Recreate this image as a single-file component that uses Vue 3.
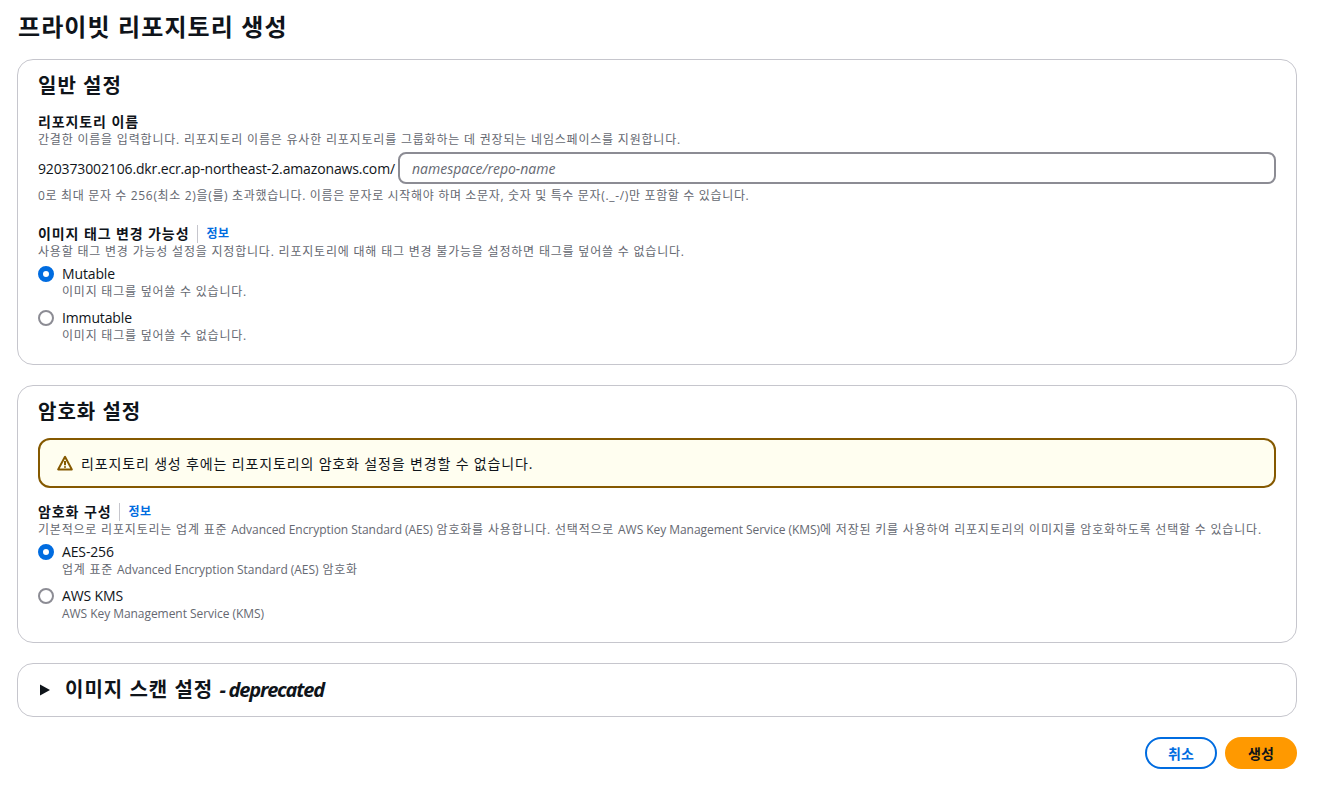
<template>
  <div class="page">
    <h1 class="page-title">프라이빗 리포지토리 생성</h1>

    <section class="card">
      <h2 class="card-title">일반 설정</h2>
      <div class="field">
        <div class="label">리포지토리 이름</div>
        <div class="desc">간결한 이름을 입력합니다. 리포지토리 이름은 유사한 리포지토리를 그룹화하는 데 권장되는 네임스페이스를 지원합니다.</div>
        <div class="repo-row">
          <span class="prefix">920373002106.dkr.ecr.ap-northeast-2.amazonaws.com/</span>
          <input class="repo-input" type="text" placeholder="namespace/repo-name" />
        </div>
        <div class="hint">0로 최대 문자 수 256(최소 2)을(를) 초과했습니다. 이름은 문자로 시작해야 하며 소문자, 숫자 및 특수 문자(._-/)만 포함할 수 있습니다.</div>
      </div>

      <div class="field field-gap">
        <div class="label-row">
          <span class="label">이미지 태그 변경 가능성</span>
          <a class="info">정보</a>
        </div>
        <div class="desc">사용할 태그 변경 가능성 설정을 지정합니다. 리포지토리에 대해 태그 변경 불가능을 설정하면 태그를 덮어쓸 수 없습니다.</div>
        <div class="radios">
          <div class="radio" v-for="opt in tagOptions" :key="opt.name">
            <span class="dot" :class="{ on: opt.on }"></span>
            <div>
              <div class="radio-name">{{ opt.name }}</div>
              <div class="radio-desc">{{ opt.desc }}</div>
            </div>
          </div>
        </div>
      </div>
    </section>

    <section class="card">
      <h2 class="card-title">암호화 설정</h2>
      <div class="alert">
        <svg class="alert-icon" width="16" height="16" viewBox="0 0 16 16" fill="none">
          <path d="M8 1.8 1.2 14.4h13.6L8 1.8Z" stroke="#855900" stroke-width="2" stroke-linejoin="round" />
          <path d="M8 6v4.2M8 11.2v1.6" stroke="#855900" stroke-width="2" />
        </svg>
        <span>리포지토리 생성 후에는 리포지토리의 암호화 설정을 변경할 수 없습니다.</span>
      </div>
      <div class="field field-enc">
        <div class="label-row">
          <span class="label">암호화 구성</span>
          <a class="info">정보</a>
        </div>
        <div class="desc">기본적으로 리포지토리는 업계 표준 <span class="latin">Advanced Encryption Standard (AES)</span> 암호화를 사용합니다. 선택적으로 <span class="latin">AWS Key Management Service (KMS)</span>에 저장된 키를 사용하여 리포지토리의 이미지를 암호화하도록 선택할 수 있습니다.</div>
        <div class="radios">
          <div class="radio">
            <span class="dot on"></span>
            <div>
              <div class="radio-name">AES-256</div>
              <div class="radio-desc">업계 표준 <span class="latin">Advanced Encryption Standard (AES)</span> 암호화</div>
            </div>
          </div>
          <div class="radio">
            <span class="dot"></span>
            <div>
              <div class="radio-name">AWS KMS</div>
              <div class="radio-desc"><span class="latin">AWS Key Management Service (KMS)</span></div>
            </div>
          </div>
        </div>
      </div>
    </section>

    <section class="card card-collapsed">
      <svg class="caret" width="12" height="12" viewBox="0 0 12 12">
        <path d="M1 0.5 11 6 1 11.5Z" fill="#0f141a" />
      </svg>
      <h2 class="card-title">이미지 스캔 설정 <em>- deprecated</em></h2>
    </section>

    <div class="actions">
      <button class="btn btn-cancel">취소</button>
      <button class="btn btn-create">생성</button>
    </div>
  </div>
</template>

<script setup>
const tagOptions = [
  { name: 'Mutable', desc: '이미지 태그를 덮어쓸 수 있습니다.', on: true },
  { name: 'Immutable', desc: '이미지 태그를 덮어쓸 수 없습니다.', on: false },
]
</script>

<style>
html, body {
  margin: 0;
  background: #ffffff;
}
</style>

<style scoped>
.page {
  box-sizing: border-box;
  width: 1319px;
  height: 789px;
  overflow: hidden;
  padding: 10px 22px 0 17px;
  font-family: "Open Sans", "Noto Sans CJK KR", sans-serif;
  color: #0f141a;
  background: #fff;
}

.page-title {
  margin: 0 0 16px;
  padding-left: 1px;
  font-size: 24px;
  line-height: 33px;
  font-weight: 700;
  letter-spacing: 1.1px;
}

.card {
  border: 1px solid #c6c6cd;
  border-radius: 16px;
  padding: 13px 20px 20px;
  margin-bottom: 20px;
}

.card-title {
  margin: 0;
  font-size: 20px;
  line-height: 26px;
  font-weight: 700;
  letter-spacing: 1px;
}

.field {
  margin-top: 14px;
}

.field-gap {
  margin-top: 21px;
}

.field-enc {
  margin-top: 15px;
}

.label {
  font-size: 14px;
  line-height: 18px;
  font-weight: 700;
  letter-spacing: 0.9px;
}

.label-row {
  display: flex;
  align-items: center;
  height: 18px;
}

.info {
  margin-left: 8px;
  padding-left: 8px;
  border-left: 1px solid #c6c6cd;
  font-size: 12px;
  line-height: 18px;
  font-weight: 700;
  letter-spacing: 0.5px;
  color: #006ce0;
}

.desc {
  font-size: 12px;
  line-height: 18px;
  letter-spacing: 0.8px;
  color: #656871;
}

.radio-desc {
  font-size: 12px;
  line-height: 16px;
  letter-spacing: 0.78px;
  color: #656871;
}

.hint {
  margin-top: 4px;
  font-size: 12px;
  line-height: 16px;
  letter-spacing: 0.66px;
  color: #656871;
}

.latin {
  letter-spacing: -0.05px;
}

.repo-row {
  display: flex;
  align-items: center;
  margin-top: 3px;
}

.prefix {
  font-size: 14px;
  letter-spacing: -0.14px;
  white-space: nowrap;
}

.repo-input {
  flex: 1;
  min-width: 0;
  box-sizing: border-box;
  height: 32px;
  margin-left: 3px;
  padding: 0 12px;
  border: 2px solid #8c8c94;
  border-radius: 8px;
  outline: none;
  font-family: inherit;
  font-size: 14px;
}

.repo-input::placeholder {
  font-style: italic;
  color: #656871;
}

.radios {
  display: flex;
  flex-direction: column;
  gap: 8px;
  margin-top: 3px;
}

.radio {
  display: flex;
  gap: 8px;
}

.dot {
  flex: none;
  box-sizing: border-box;
  width: 16px;
  height: 16px;
  margin-top: 2px;
  border: 2px solid #8c8c94;
  border-radius: 50%;
}

.dot.on {
  border: 5px solid #006ce0;
}

.radio-name {
  font-size: 14px;
  line-height: 20px;
  letter-spacing: -0.14px;
}

.alert {
  display: flex;
  align-items: center;
  gap: 8px;
  box-sizing: border-box;
  height: 50px;
  margin-top: 13px;
  padding: 0 17px;
  border: 2px solid #855900;
  border-radius: 12px;
  background: #fffef0;
  font-size: 14px;
  letter-spacing: 0.85px;
}

.card-collapsed {
  display: flex;
  align-items: center;
  gap: 14px;
  height: 54px;
  box-sizing: border-box;
  padding: 0 21px;
}

.card-collapsed em {
  font-style: italic;
  letter-spacing: -1.2px;
}

.actions {
  display: flex;
  justify-content: flex-end;
  gap: 8px;
}

.btn {
  box-sizing: border-box;
  width: 72px;
  height: 32px;
  border-radius: 20px;
  font-family: inherit;
  font-size: 14px;
  font-weight: 700;
  letter-spacing: 0.2px;
  cursor: pointer;
}

.btn-cancel {
  border: 2px solid #006ce0;
  background: #fff;
  color: #006ce0;
}

.btn-create {
  border: none;
  background: #ff9900;
  color: #0f141a;
}
</style>
